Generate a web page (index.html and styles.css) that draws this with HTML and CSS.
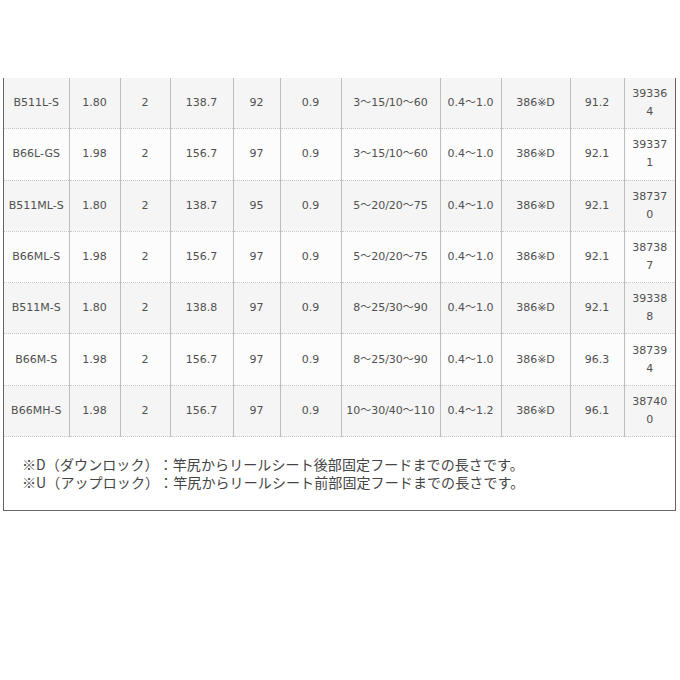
FILE: index.html
```html
<!DOCTYPE html>
<html lang="ja">
<head>
<meta charset="utf-8">
<link rel="stylesheet" href="styles.css">
</head>
<body>
<div class="spec">
  <table class="spec-table">
    <colgroup>
      <col class="c1"><col class="c2"><col class="c3"><col class="c4"><col class="c5"><col class="c6"><col class="c7"><col class="c8"><col class="c9"><col class="c10"><col class="c11">
    </colgroup>
    <tbody>
      <tr><td>B511L-S</td><td>1.80</td><td>2</td><td>138.7</td><td>92</td><td>0.9</td><td>3～15/10～60</td><td>0.4～1.0</td><td>386※D</td><td>91.2</td><td class="code">393364</td></tr>
      <tr><td>B66L-GS</td><td>1.98</td><td>2</td><td>156.7</td><td>97</td><td>0.9</td><td>3～15/10～60</td><td>0.4～1.0</td><td>386※D</td><td>92.1</td><td class="code">393371</td></tr>
      <tr><td>B511ML-S</td><td>1.80</td><td>2</td><td>138.7</td><td>95</td><td>0.9</td><td>5～20/20～75</td><td>0.4～1.0</td><td>386※D</td><td>92.1</td><td class="code">387370</td></tr>
      <tr><td>B66ML-S</td><td>1.98</td><td>2</td><td>156.7</td><td>97</td><td>0.9</td><td>5～20/20～75</td><td>0.4～1.0</td><td>386※D</td><td>92.1</td><td class="code">387387</td></tr>
      <tr><td>B511M-S</td><td>1.80</td><td>2</td><td>138.8</td><td>97</td><td>0.9</td><td>8～25/30～90</td><td>0.4～1.0</td><td>386※D</td><td>92.1</td><td class="code">393388</td></tr>
      <tr><td>B66M-S</td><td>1.98</td><td>2</td><td>156.7</td><td>97</td><td>0.9</td><td>8～25/30～90</td><td>0.4～1.0</td><td>386※D</td><td>96.3</td><td class="code">387394</td></tr>
      <tr><td>B66MH-S</td><td>1.98</td><td>2</td><td>156.7</td><td>97</td><td>0.9</td><td>10～30/40～110</td><td>0.4～1.2</td><td>386※D</td><td>96.1</td><td class="code">387400</td></tr>
    </tbody>
  </table>
  <div class="notes">
    <p>※D（ダウンロック）：竿尻からリールシート後部固定フードまでの長さです。</p>
    <p>※U（アップロック）：竿尻からリールシート前部固定フードまでの長さです。</p>
  </div>
</div>
</body>
</html>
```

FILE: styles.css
```css
html, body {
  margin: 0;
  padding: 0;
  background: #fff;
}

body {
  font-family: "DejaVu Sans", "Noto Sans CJK JP", sans-serif;
  color: #555;
}

.spec {
  margin: 78px 0 0 3px;
  width: 671px;
  border: 1px solid #666;
  border-top: none;
}

.spec-table {
  width: 671px;
  border-collapse: collapse;
  table-layout: fixed;
}

.c1 { width: 65px; }
.c2 { width: 51px; }
.c3 { width: 50px; }
.c4 { width: 63px; }
.c5 { width: 47px; }
.c6 { width: 61px; }
.c7 { width: 99px; }
.c8 { width: 61px; }
.c9 { width: 69px; }
.c10 { width: 54px; }
.c11 { width: 51px; }

.spec-table td {
  height: 50.3px;
  padding: 0 2px;
  text-align: center;
  vertical-align: middle;
  font-size: 11px;
  line-height: 18px;
  color: #505050;
  border-right: 1px solid #bdbdbd;
  border-bottom: 1px dotted #c8c8c8;
  white-space: nowrap;
}

.spec-table td:last-child {
  border-right: none;
}

.spec-table td.code {
  white-space: normal;
  word-break: break-all;
  padding: 0 6px;
}

.spec-table tr:nth-child(odd) td {
  background: #f5f5f5;
}

.spec-table tr:nth-child(even) td {
  background: #fcfcfc;
}

.notes {
  padding: 18px 10px 19px 18px;
  font-family: "Noto Sans CJK JP", sans-serif;
  font-size: 14px;
  line-height: 18px;
  color: #444;
  text-spacing-trim: space-all;
  letter-spacing: 0.1px;
}

.notes p {
  margin: 0;
}
```
